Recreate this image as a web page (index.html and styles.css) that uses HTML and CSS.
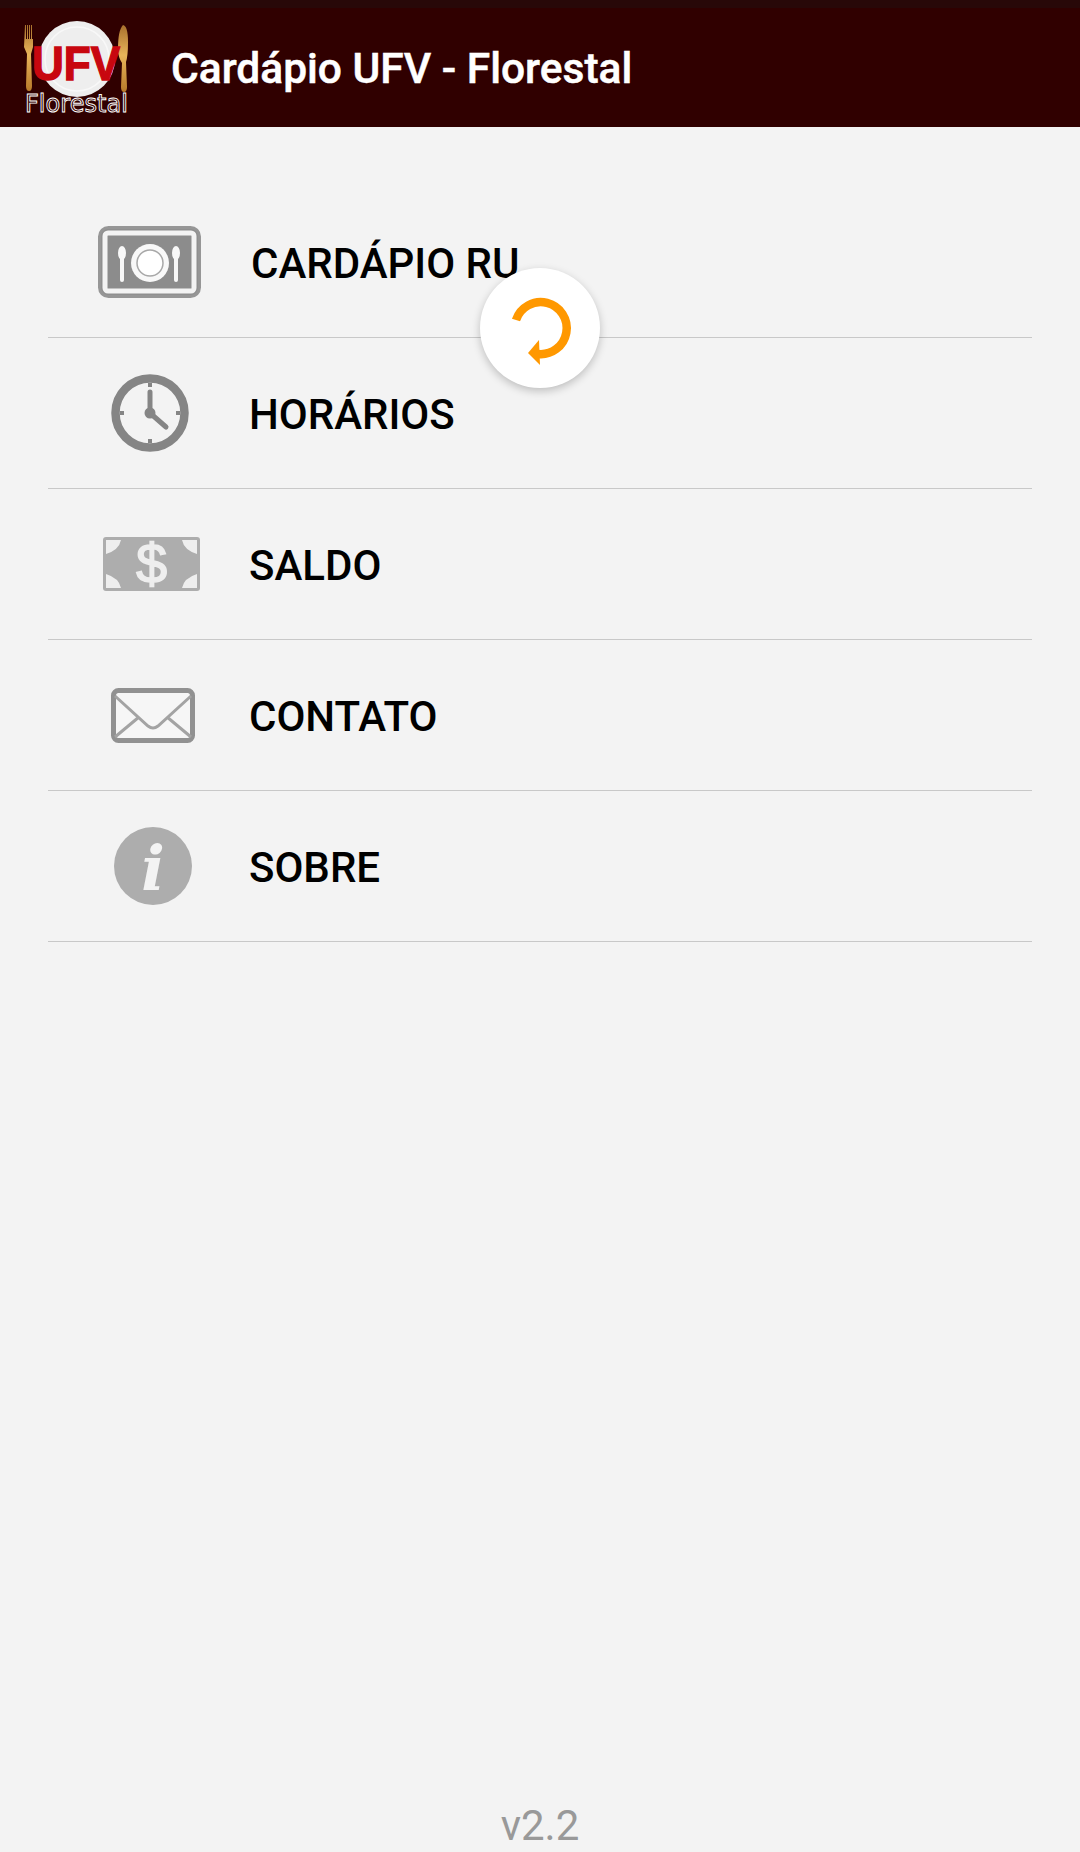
FILE: index.html
```html
<!DOCTYPE html>
<html lang="pt-BR">
<head>
	<meta charset="UTF-8">
	<title>Cardápio UFV - Florestal</title>
	<link rel="stylesheet" href="styles.css">
</head>
<body>
<div id="app">
	<div class="status"></div>
	<div class="toolbar">
		<svg class="logo" width="112" height="96" viewBox="0 0 112 96">
			<defs>
				<linearGradient id="gold" x1="0" y1="0" x2="0" y2="1">
					<stop offset="0" stop-color="#a8702c"/>
					<stop offset="0.45" stop-color="#e8b45a"/>
					<stop offset="1" stop-color="#b87a2a"/>
				</linearGradient>
			</defs>
			<circle cx="53" cy="40" r="38" fill="#eeeeee"/>
			<circle cx="53" cy="40" r="32" fill="none" stroke="#f8f8f8" stroke-width="1.500"/>
			<!-- fork -->
			<path d="M1 6h1v14h1V6h1v14h1V6h1v14h1V6h1v14h1v8l-2 7 1 32q0 5-3 5t-3-5l1-32-3-7z" fill="url(#gold)"/>
			<!-- knife -->
			<path d="M99 6q5 1 5 17 0 14-2 20l1 25q0 5-3 5t-3-5l1-24q-4-6-4-14 0-19 5-24z" fill="url(#gold)"/>
			<text x="8" y="61" class="logo-ufv" textLength="88" lengthAdjust="spacingAndGlyphs">UFV</text>
			<text x="1" y="93" class="logo-name" textLength="103" lengthAdjust="spacingAndGlyphs">Florestal</text>
		</svg>
		<h1>Cardápio UFV - Florestal</h1>
	</div>
	<ul class="menu">
		<li>
			<div class="ico">
				<svg width="103" height="72" viewBox="0 0 103 72">
					<rect x="1.500" y="1.500" width="100" height="69" rx="9" fill="#8f8f8f" stroke="#969696" stroke-width="3"/>
					<rect x="7" y="7" width="89" height="58" rx="3" fill="#8c8c8c" stroke="#f3f3f3" stroke-width="5"/>
					<circle cx="52" cy="37" r="19" fill="#f8f8f8"/>
					<circle cx="52" cy="37" r="13" fill="#fff" stroke="#a8a8a8" stroke-width="1.500"/>
					<ellipse cx="24" cy="27" rx="4" ry="7" fill="#f8f8f8"/>
					<rect x="22" y="30" width="4" height="26" rx="2" fill="#f8f8f8"/>
					<ellipse cx="78" cy="27" rx="4" ry="7" fill="#f8f8f8"/>
					<rect x="76" y="30" width="4" height="26" rx="2" fill="#f8f8f8"/>
				</svg>
			</div>
			<span class="label first">CARDÁPIO RU</span>
		</li>
		<li>
			<div class="ico">
				<svg width="78" height="78" viewBox="0 0 78 78">
					<circle cx="39" cy="39" r="34.500" fill="none" stroke="#858585" stroke-width="8.500"/>
					<path d="M39 9v4M39 65v4M9 39h4M65 39h4" stroke="#858585" stroke-width="4"/>
					<path d="M39 18v21l16 14" fill="none" stroke="#858585" stroke-width="5" stroke-linecap="round"/>
					<circle cx="39" cy="39" r="5.500" fill="#858585"/>
				</svg>
			</div>
			<span class="label">HORÁRIOS</span>
		</li>
		<li>
			<div class="ico">
				<svg class="shift-money" width="97" height="54" viewBox="0 0 97 54">
					<rect width="97" height="54" rx="3" fill="#adadad"/>
					<path d="M3 3h15q-2 10-15 14zM94 3H79q2 10 15 14zM3 51h15q-2-10-15-14zM94 51H79q2-10 15-14z" fill="#eeeeee"/>
					<text x="48.500" y="46" class="money">$</text>
				</svg>
			</div>
			<span class="label">SALDO</span>
		</li>
		<li>
			<div class="ico">
				<svg class="shift" width="84" height="55" viewBox="0 0 84 55">
					<rect x="2.500" y="2.500" width="79" height="50" rx="5" fill="#f6f6f6" stroke="#919191" stroke-width="5"/>
					<path d="M4 8l33 30q5 4 10 0L80 8M4 49l24-20M80 49L56 29" fill="none" stroke="#a3a3a3" stroke-width="3"/>
				</svg>
			</div>
			<span class="label">CONTATO</span>
		</li>
		<li>
			<div class="ico">
				<svg class="shift" width="78" height="78" viewBox="0 0 78 78">
					<circle cx="39" cy="39" r="39" fill="#adadad"/>
					<text x="39" y="63" class="info">i</text>
				</svg>
			</div>
			<span class="label">SOBRE</span>
		</li>
	</ul>
	<div class="version">v2.2</div>
	<div class="refresh">
		<svg width="80" height="80" viewBox="0 0 80 80">
			<path d="M16 32A26 26 0 1 1 38 66" fill="none" stroke="#ff9800" stroke-width="8.500"/>
			<path d="M39 52l1 25-12-12z" fill="#ff9800"/>
		</svg>
	</div>
</div>
</body>
</html>
```
FILE: styles.css
```css
*{list-style: none;padding: 0;margin: 0;box-sizing: border-box;}
body{background: #f3f3f3;font-family: Roboto, "Liberation Sans", sans-serif;}
svg{overflow: visible;}
#app{position: relative;width: 1080px;height: 1852px;display: flex;flex-direction: column;overflow: hidden;}
.status{height: 8px;background: #280808;}
.toolbar{height: 119px;background: #300000;display: flex;align-items: center;padding-left: 24px;}
.toolbar h1{margin-left: 35px;margin-top: 2px;font-size: 42.5px;font-weight: 500;color: #fff;-webkit-text-stroke: .5px #fff;}
.logo{margin-top: -2px;}
.logo-ufv{font-family: "Liberation Sans", sans-serif;font-size: 49px;font-weight: bold;fill: #c8070f;stroke: #c8070f;stroke-width: 1.5;}
.logo-name{font-family: "DejaVu Sans", sans-serif;font-size: 25px;fill: #300000;stroke: #fff;stroke-width: .9;}
.menu{margin: 60px 48px 0;}
.menu li{height: 151px;display: flex;align-items: center;border-bottom: 1px solid #c8c8c8;}
.ico{width: 203px;display: flex;justify-content: center;filter: blur(.6px);}
.shift{margin-left: 6px;}
.shift-money{margin-left: 3px;}
.label{margin-left: -2px;padding-top: 2px;font-size: 42px;font-weight: 500;color: #000;}
.first{margin-left: 0;}
.money{font-family: "Liberation Sans", sans-serif;font-size: 56px;fill: #eeeeee;stroke: #eeeeee;stroke-width: 1.5;text-anchor: middle;}
.info{font-family: "DejaVu Serif", serif;font-size: 62px;font-weight: bold;font-style: italic;fill: #f3f3f3;text-anchor: middle;}
.version{margin-top: auto;text-align: center;font-size: 42px;color: #999;line-height: 52px;}
.refresh{position: absolute;left: 480px;top: 268px;width: 120px;height: 120px;border-radius: 50%;background: #fff;box-shadow: 0 3px 8px rgba(0,0,0,.22);display: flex;align-items: center;justify-content: center;}
```
